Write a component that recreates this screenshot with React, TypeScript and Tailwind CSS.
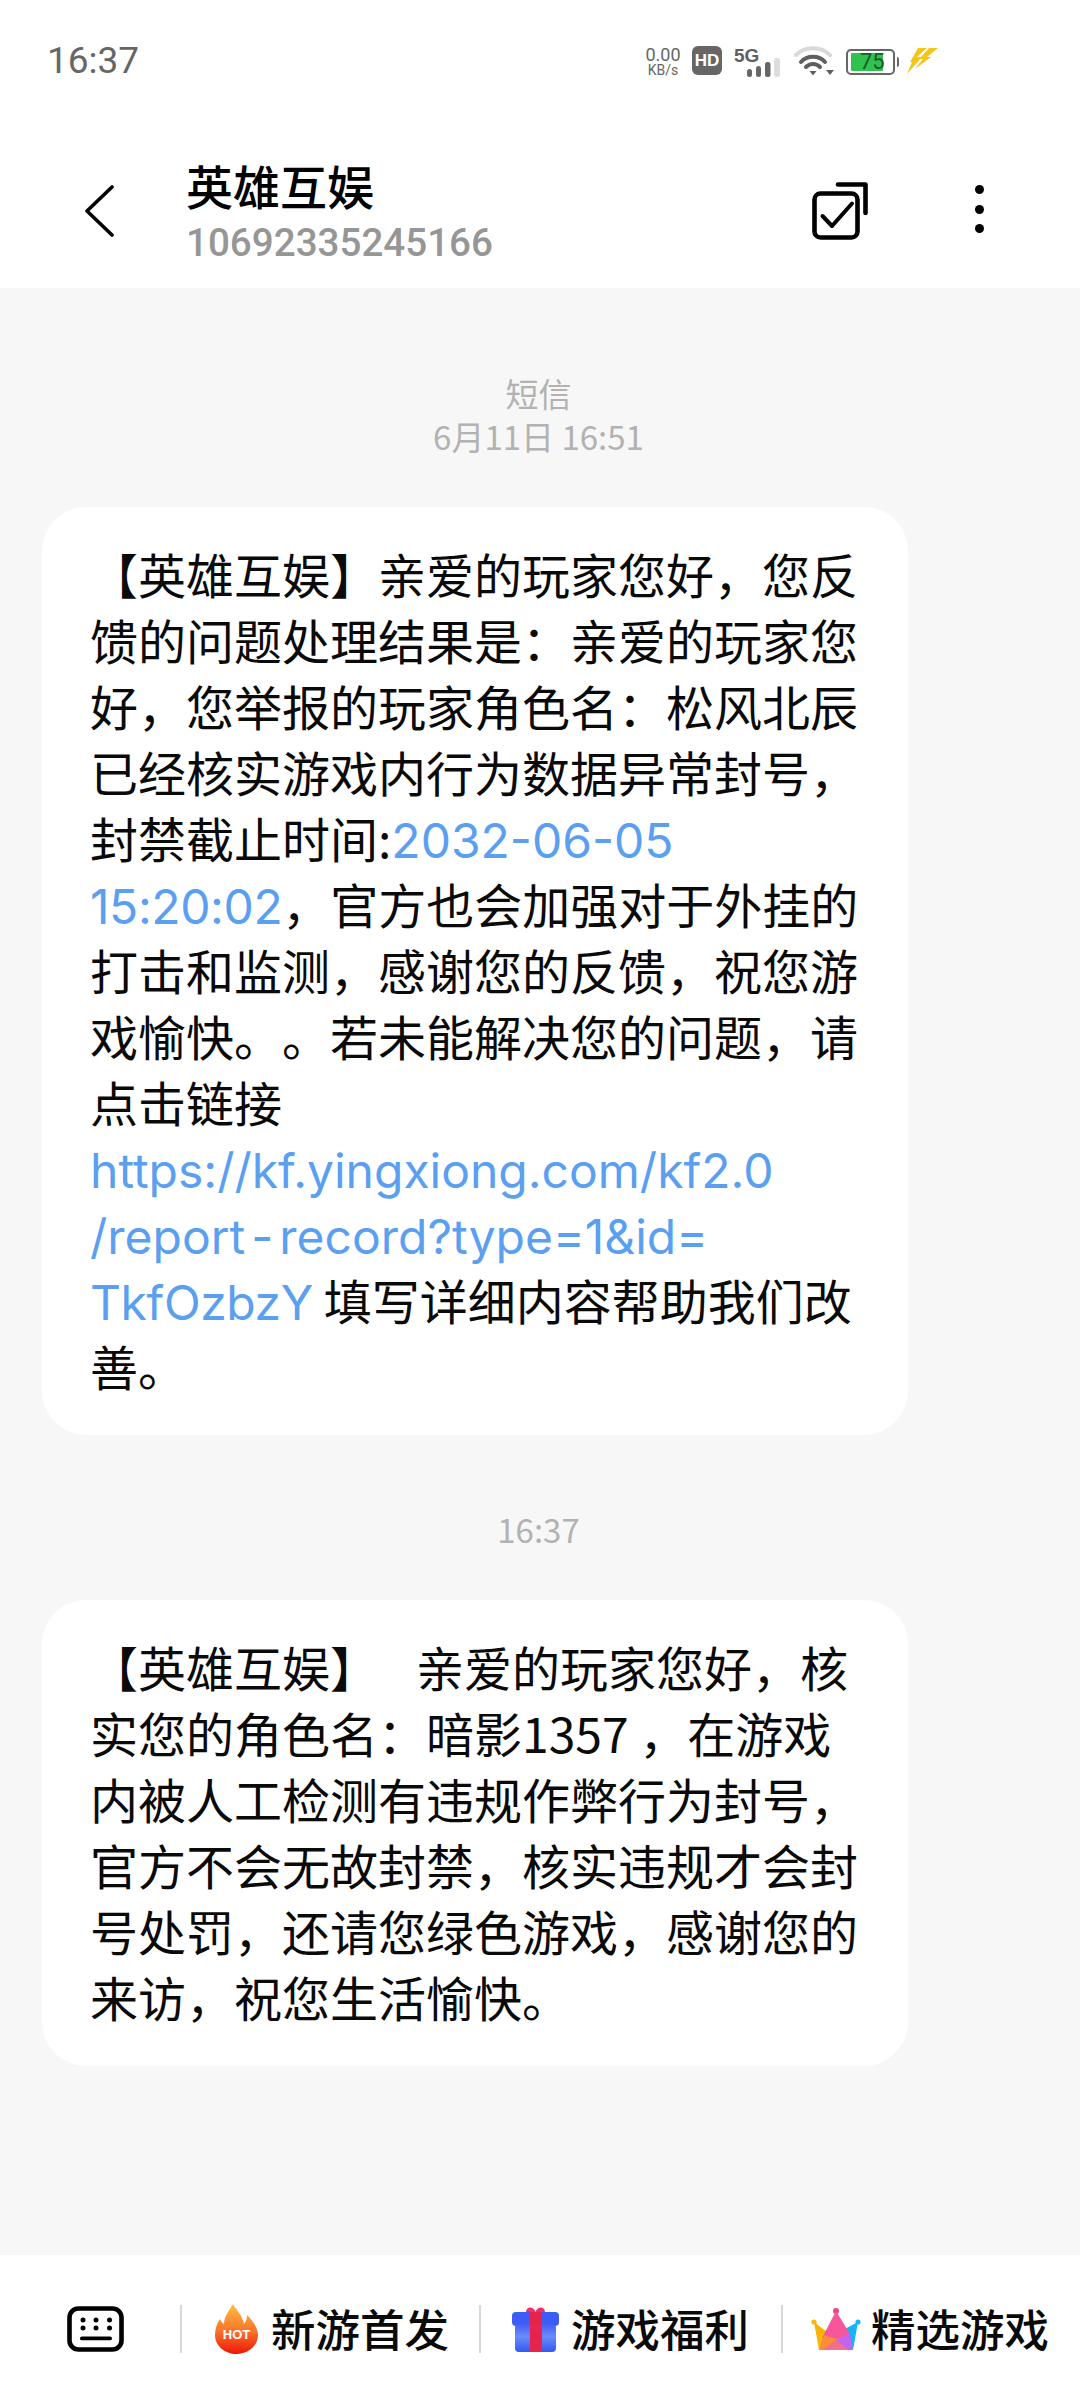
const F = { fontFamily: '"Noto Sans CJK SC", sans-serif' };
const L = { fontFamily: 'Inter, "Noto Sans CJK SC", sans-serif' };

const Chevron = () => (
  <svg width="30" height="52" viewBox="0 0 30 52" fill="none" stroke="#000" strokeWidth="3.6" strokeLinecap="round" strokeLinejoin="round">
    <path d="M28 2 L3 26 L28 50" />
  </svg>
);

const SelectIcon = () => (
  <svg width="58" height="58" viewBox="0 0 58 58" fill="none" stroke="#000" strokeLinecap="round" strokeLinejoin="round">
    <path d="M26 2.5 H53.5 V31" strokeWidth="4.6" />
    <rect x="2.5" y="11.5" width="43" height="44" rx="6" strokeWidth="4.6" />
    <path d="M10.5 34 L20 44 L40 21.5" strokeWidth="4" />
  </svg>
);

const Dots = () => (
  <div className="flex flex-col items-center gap-[10.5px]">
    <div className="w-[9px] h-[9px] rounded-full bg-black" />
    <div className="w-[9px] h-[9px] rounded-full bg-black" />
    <div className="w-[9px] h-[9px] rounded-full bg-black" />
  </div>
);

const Signal = () => (
  <svg width="36" height="19" viewBox="0 0 36 19">
    <rect x="1" y="11" width="5" height="8" rx="2.5" fill="#666" />
    <rect x="10" y="8" width="5" height="11" rx="2.5" fill="#666" />
    <rect x="19" y="4" width="5.5" height="15" rx="2.5" fill="#666" />
    <rect x="28" y="0" width="6" height="19" rx="2.5" fill="#ddd" />
  </svg>
);

const Wifi = () => (
  <svg width="42" height="30" viewBox="0 0 42 30" fill="none" strokeLinecap="round">
    <path d="M2 9 C11 0 27 0 36 9" stroke="#d9d9d9" strokeWidth="4" />
    <path d="M7 16 C13 9 25 9 31 16" stroke="#5f5f5f" strokeWidth="4" />
    <path d="M12 21 C16 17 22 17 26 21" stroke="#5f5f5f" strokeWidth="4" />
    <path d="M15.5 25 L22.5 25 L19 29.5 Z" fill="#5f5f5f" />
    <path d="M32 24 L40 24 L36 29 Z" fill="#5f5f5f" />
  </svg>
);

const Battery = () => (
  <div className="flex items-center">
    <div className="relative w-[49px] h-[26px] rounded-[5px] border-[2px] border-[#666] flex items-center pl-[3px]">
      <div className="w-[32px] h-[18px] bg-[#2fc24f] rounded-[1px]" />
      <span className="absolute left-[12px] top-0 h-full flex items-center text-[22px] leading-none text-[#1c5a2a]" style={{ fontFamily: "Roboto, sans-serif" }}>75</span>
    </div>
    <div className="ml-[2px] w-[2px] h-[10px] bg-[#666] rounded-r-[2px]" />
  </div>
);

const Bolt = () => (
  <svg width="31" height="26" viewBox="0 0 31 26" fill="#f5c518">
    <path d="M11 0 L20 0 L10 9 L15 9 L0 26 L5 14 L3 14 Z" />
    <path d="M22 0 L31 0 L20 9 L24 9 L8 21 L16 11 L12 11 Z" />
  </svg>
);

const Keyboard = () => (
  <svg width="58" height="46" viewBox="0 0 58 46" fill="none">
    <rect x="2.5" y="2.5" width="52" height="41" rx="9" stroke="#000" strokeWidth="4.6" />
    <g fill="#000">
      <circle cx="16" cy="14" r="2.5" /><circle cx="29" cy="14" r="2.5" /><circle cx="42.5" cy="14" r="2.5" />
      <circle cx="16" cy="22" r="2.5" /><circle cx="29" cy="22" r="2.5" /><circle cx="42.5" cy="22" r="2.5" />
      <rect x="13" y="30.5" width="32" height="3.8" rx="1.9" />
    </g>
  </svg>
);

const Flame = () => (
  <div className="relative w-[43px] h-[50px]">
    <svg width="43" height="50" viewBox="0 0 43 50" className="block">
      <defs>
        <linearGradient id="fl" x1="0" y1="0" x2="0" y2="1">
          <stop offset="0" stopColor="#fdc043" />
          <stop offset="0.55" stopColor="#f9722a" />
          <stop offset="1" stopColor="#ee1607" />
        </linearGradient>
      </defs>
      <path d="M18 0 C21 6 27 10 29 20 C31 17 32 15 32 11 C38 17 43 24 43 31 C43 42 33 50 21.5 50 C10 50 0 42 0 31 C0 25 2 19 5 15 C6 17 7 19 9 20 C9 12 14 7 18 0 Z" fill="url(#fl)" />
    </svg>
    <span className="absolute left-0 right-0 top-[24px] text-center text-[13px] leading-[14px] font-bold text-white" style={{ fontFamily: '"Liberation Sans", sans-serif' }}>HOT</span>
  </div>
);

const Gift = () => (
  <svg width="47" height="46" viewBox="0 0 47 46">
    <defs>
      <linearGradient id="gf" x1="0" y1="0" x2="0" y2="1">
        <stop offset="0" stopColor="#3f5ff5" />
        <stop offset="0.45" stopColor="#6a8cfb" />
        <stop offset="1" stopColor="#3558f0" />
      </linearGradient>
    </defs>
    <path d="M14 6 C14 0 22 0 23.5 6 C25 0 33 0 33 6 L33 9 L14 9 Z" fill="#ee2f6b" />
    <rect x="0" y="6" width="47" height="14" rx="4" fill="#3c5cf5" />
    <rect x="3" y="18" width="41" height="28" rx="4" fill="url(#gf)" />
    <rect x="18" y="6" width="12" height="40" fill="#e4234f" />
  </svg>
);

const Crown = () => (
  <svg width="50" height="42" viewBox="0 0 50 42">
    <circle cx="25" cy="3" r="3" fill="#f0427f" />
    <circle cx="3" cy="14" r="2.6" fill="#f8b90c" />
    <circle cx="47" cy="14" r="2.6" fill="#18b7f5" />
    <path d="M3 14 L8 42 L24 30 Z" fill="#fbb507" />
    <path d="M47 14 L42 42 L28 24 Z" fill="#14b4f6" />
    <path d="M25 3 L11 30 L25 32 L39 26 Z" fill="#f7569a" />
    <path d="M8 42 L13 27 L30 32 L24 42 Z" fill="#fb8b3a" />
    <path d="M42 42 L39 25 L25 32 L33 42 Z" fill="#c364ee" />
    <path d="M12 42 L25 32 L38 42 Z" fill="#f0708c" />
  </svg>
);

const Sep = () => <div className="w-[2px] h-[48px] bg-[#d8d8d8]" />;

const Line = ({ children }: { children: React.ReactNode }) => (
  <div className="whitespace-nowrap h-[66px] leading-[66px] [text-spacing-trim:space-all]">{children}</div>
);

const Link = ({ children }: { children: React.ReactNode }) => (
  <span className="text-[#5b9ff0]" style={L}>{children}</span>
);

const Hy = () => <span className="px-[6px]">-</span>;

const Bubble = ({ children }: { children: React.ReactNode }) => (
  <div className="w-[866px] ml-[42px] bg-white rounded-[44px] pl-[48px] pt-[33px] pb-[37px] text-[48px] text-[#0a0a0a]">
    {children}
  </div>
);

const Stamp = ({ children }: { children: React.ReactNode }) => (
  <div className="text-center pr-[3px] text-[33px] h-[43px] leading-[41px] text-[#b2b2b2]">{children}</div>
);

const Chip = ({ icon, label, gap }: { icon: React.ReactNode; label: string; gap: string }) => (
  <div className={`flex items-center ${gap}`}>
    {icon}
    <span className="text-[44.5px] leading-none font-medium text-[#0a0a0a]">{label}</span>
  </div>
);

export default function App() {
  return (
    <div className="w-[1080px] h-[2408px] bg-[#f7f7f7] flex flex-col" style={F}>
      <header className="bg-white h-[288px] shrink-0">
        <div className="h-[120px] pl-[47px] pr-[142px] flex items-start justify-between">
          <span className="mt-[39px] text-[37px] leading-[44px] text-[#666]" style={{ fontFamily: "Roboto, sans-serif" }}>16:37</span>
          <div className="mt-[46px] flex items-start">
            <div className="w-[38px] flex flex-col items-center text-[#666]" style={{ fontFamily: "Roboto, sans-serif" }}>
              <span className="text-[18px] leading-[17px]">0.00</span>
              <span className="text-[14px] leading-[14px]">KB/s</span>
            </div>
            <div className="ml-[10px] w-[30px] h-[29px] rounded-[6px] bg-[#666] flex items-center justify-center text-white text-[17px] font-bold leading-none" style={{ fontFamily: '"Liberation Sans", sans-serif' }}>HD</div>
            <div className="relative ml-[12px] w-[47px] h-[30px]">
              <span className="absolute left-0 top-0 text-[19px] leading-[19px] font-bold text-[#5f5f5f]" style={{ fontFamily: '"Liberation Sans", sans-serif' }}>5G</span>
              <div className="absolute left-[12px] top-[12px]"><Signal /></div>
            </div>
            <div className="ml-[13px]"><Wifi /></div>
            <div className="ml-[10px] mt-[3px]"><Battery /></div>
            <div className="ml-[8px] mt-[2px]"><Bolt /></div>
          </div>
        </div>
        <div className="flex items-start pl-[84px] pr-[96px]">
          <div className="mt-[65px]"><Chevron /></div>
          <div className="ml-[72px] flex-1 mt-[37px]">
            <div className="text-[47px] leading-[56px] font-medium text-black">英雄互娱</div>
            <div className="mt-[7px] text-[38.6px] leading-[46px] font-medium text-[#969696]" style={{ fontFamily: "Roboto, sans-serif" }}>10692335245166</div>
          </div>
          <div className="mt-[62px]"><SelectIcon /></div>
          <div className="ml-[105px] mt-[65px]"><Dots /></div>
        </div>
      </header>

      <main className="flex-1 pt-[85px]">
        <Stamp>短信</Stamp>
        <Stamp>6月11日 16:51</Stamp>
        <div className="mt-[48px]">
          <Bubble>
            <Line>【英雄互娱】亲爱的玩家您好，您反</Line>
            <Line>馈的问题处理结果是：亲爱的玩家您</Line>
            <Line>好，您举报的玩家角色名：松风北辰</Line>
            <Line>已经核实游戏内行为数据异常封号，</Line>
            <Line>封禁截止时间:<Link>2032-06-05</Link></Line>
            <Line><span className="tracking-[-0.4px]"><Link>15:20:02</Link></span>，官方也会加强对于外挂的</Line>
            <Line>打击和监测，感谢您的反馈，祝您游</Line>
            <Line>戏愉快。。若未能解决您的问题，请</Line>
            <Line>点击链接</Line>
            <Line><Link>https://kf.yingxiong.com/kf2.0</Link></Line>
            <Line><Link>/report<Hy />record?type=1&amp;id=</Link></Line>
            <Line><span className="tracking-[-0.4px]"><Link>TkfOzbzY</Link></span> 填写详细内容帮助我们改</Line>
            <Line>善。</Line>
          </Bubble>
        </div>
        <div className="mt-[74px]"><Stamp>16:37</Stamp></div>
        <div className="mt-[48px]">
          <Bubble>
            <Line>【英雄互娱】<span className="inline-block w-[38px]" />亲爱的玩家您好，核</Line>
            <Line>实您的角色名：暗影1357 ，在游戏</Line>
            <Line>内被人工检测有违规作弊行为封号，</Line>
            <Line>官方不会无故封禁，核实违规才会封</Line>
            <Line>号处罚，还请您绿色游戏，感谢您的</Line>
            <Line>来访，祝您生活愉快。</Line>
          </Bubble>
        </div>
      </main>

      <footer className="h-[153px] shrink-0 bg-white flex items-center pl-[67px] pb-[6px]">
        <Keyboard />
        <div className="ml-[55px]"><Sep /></div>
        <div className="ml-[33px]"><Chip icon={<Flame />} label="新游首发" gap="gap-[13px]" /></div>
        <div className="ml-[30px]"><Sep /></div>
        <div className="ml-[31px]"><Chip icon={<Gift />} label="游戏福利" gap="gap-[12px]" /></div>
        <div className="ml-[32px]"><Sep /></div>
        <div className="ml-[28px]"><Chip icon={<Crown />} label="精选游戏" gap="gap-[10px]" /></div>
      </footer>
    </div>
  );
}
